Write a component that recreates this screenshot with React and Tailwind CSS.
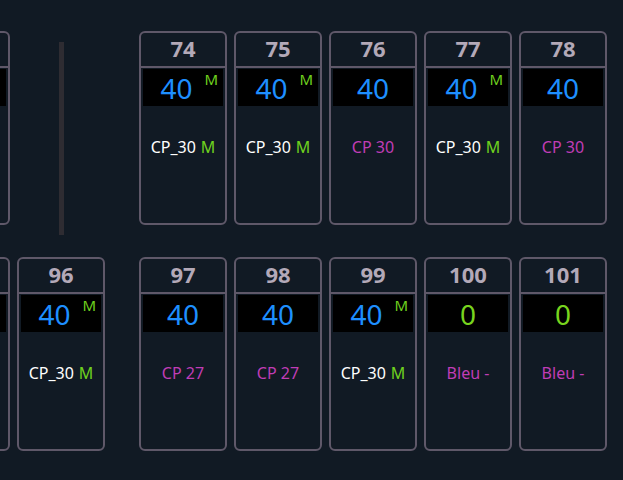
import React from "react";

const FONT = { fontFamily: '"Noto Sans", "Open Sans", sans-serif' };

function Card({ num, value, valueColor = "text-[#1e8fff]", vm, label, labelColor = "text-white", lm }) {
  return (
    <div className="w-[88px] h-[194px] shrink-0 border-2 border-[#5f5869] rounded-[6px] flex flex-col">
      <div className="h-[35px] shrink-0 border-b-2 border-[#5f5869] flex items-center justify-center pb-[3px]">
        <span className="text-[22px] font-bold text-[#b3a9b8] leading-none">{num}</span>
      </div>
      <div className={`relative mx-[2px] mt-[1px] h-[37px] bg-black flex items-center justify-center ${vm ? "pr-[13px]" : ""}`}>
        <span className={`text-[28px] leading-none ${valueColor}`}>{value}</span>
        {vm && (
          <span className="absolute top-[3px] right-[5px] text-[15px] leading-none text-[#6fd11e]">M</span>
        )}
      </div>
      <div className="mt-[33px] flex items-start justify-center text-[16px] leading-none">
        <span className={labelColor}>{label}</span>
        {lm && <span className="ml-[5px] text-[#6fd11e]">M</span>}
      </div>
    </div>
  );
}

export default function App() {
  return (
    <div style={FONT} className="w-[623px] h-[480px] overflow-hidden bg-[#111a24] flex flex-col pt-[31px] gap-[32px]">
      <div className="h-[194px] flex items-start gap-[7px] ml-[-78px]">
        <Card num="" value="" />
        <div className="w-[88px] shrink-0 flex justify-center">
          <div className="mt-[11px] w-[5px] h-[193px] bg-[#2e2c32]" />
        </div>
        <div className="ml-[27px] flex gap-[7px]">
          <Card num="74" value="40" vm label="CP_30" lm />
          <Card num="75" value="40" vm label="CP_30" lm />
          <Card num="76" value="40" label="CP 30" labelColor="text-[#c03db6]" />
          <Card num="77" value="40" vm label="CP_30" lm />
          <Card num="78" value="40" label="CP 30" labelColor="text-[#c03db6]" />
        </div>
      </div>
      <div className="h-[194px] flex items-start gap-[7px] ml-[-78px]">
        <Card num="" value="" />
        <Card num="96" value="40" vm label="CP_30" lm />
        <div className="ml-[27px] flex gap-[7px]">
          <Card num="97" value="40" label="CP 27" labelColor="text-[#c03db6]" />
          <Card num="98" value="40" label="CP 27" labelColor="text-[#c03db6]" />
          <Card num="99" value="40" vm label="CP_30" lm />
          <Card num="100" value="0" valueColor="text-[#78d41e]" label="Bleu -" labelColor="text-[#c03db6]" />
          <Card num="101" value="0" valueColor="text-[#78d41e]" label="Bleu -" labelColor="text-[#c03db6]" />
        </div>
      </div>
    </div>
  );
}
